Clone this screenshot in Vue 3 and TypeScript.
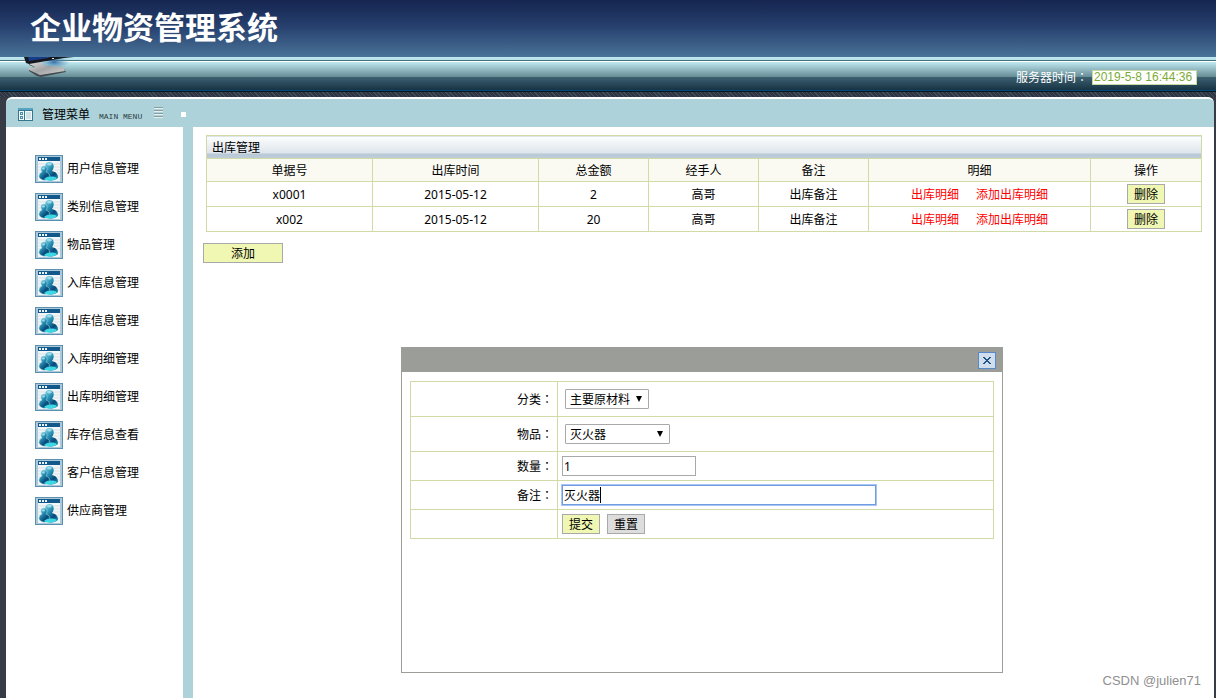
<script setup lang="ts">
import { ref } from 'vue'

interface StockOut {
  no: string
  date: string
  total: number
  handler: string
  remark: string
}

const menu: string[] = [
  '用户信息管理', '类别信息管理', '物品管理', '入库信息管理', '出库信息管理',
  '入库明细管理', '出库明细管理', '库存信息查看', '客户信息管理', '供应商管理',
]
const columns: string[] = ['单据号', '出库时间', '总金额', '经手人', '备注', '明细', '操作']
const rows = ref<StockOut[]>([
  { no: 'x0001', date: '2015-05-12', total: 2, handler: '高哥', remark: '出库备注' },
  { no: 'x002', date: '2015-05-12', total: 20, handler: '高哥', remark: '出库备注' },
])
const serverTime = ref('2019-5-8 16:44:36')
const dialogOpen = ref(true)
const category = ref('主要原材料')
const item = ref('灭火器')
const quantity = ref('1')
const remark = ref('灭火器')

function removeRow(index: number) {
  rows.value.splice(index, 1)
}
function resetForm() {
  quantity.value = ''
  remark.value = ''
}
</script>

<template>
  <div class="page">
    <header class="banner">
      <h1>企业物资管理系统</h1>
    </header>
    <div class="strip">
      <svg class="laptop" width="52" height="22" viewBox="0 0 52 22" aria-hidden="true">
        <defs>
          <linearGradient id="foot" x1="0" y1="0" x2="1" y2="1">
            <stop offset="0" stop-color="#e6e6e6" />
            <stop offset="0.5" stop-color="#a2a4a6" />
            <stop offset="1" stop-color="#d2d2d2" />
          </linearGradient>
          <radialGradient id="glow">
            <stop offset="0" stop-color="#356ea8" />
            <stop offset="1" stop-color="#5d9dbb" stop-opacity="0" />
          </radialGradient>
        </defs>
        <ellipse cx="30" cy="5" rx="16" ry="7" fill="url(#glow)" />
        <path d="M5 6 15 5 22 9 40 12 42 15 17 20 13 19 5 14 5 12 10 10 5 8Z" fill="#444c50" />
        <path d="M3 5 15 4 22 9 39 10 41 14 16 18 5 13 4 11 11 10 5 7Z" fill="url(#foot)" />
        <path d="M0 0H50L40 1 5 7 2 6Z" fill="#15191f" />
        <path d="M4 0H26L24 1 5 4Z" fill="#173c88" />
        <path d="M28 1h2v1h-2z" fill="#dce7ef" />
      </svg>
      <label class="clock">
        <span>服务器时间<i class="colon">：</i></span>
        <input v-model="serverTime" type="text" readonly />
      </label>
    </div>

    <div class="shell">
      <div class="shell-head">
        <svg width="15" height="13" viewBox="0 0 15 13" aria-hidden="true">
          <path d="M0 0h15v13H0z" fill="#33788f" />
          <path d="M0 0h15v2H0z" fill="#57a3c1" />
          <path d="M1 3h5v9H1zM7 3h7v9H7z" fill="#f2f8fa" />
          <path d="M8 4h5v7H8z" fill="#cfe1e8" />
          <path d="M2 4h3v3H2zM2 8h3v3H2z" fill="#4a8fa8" />
          <path d="M3 5h1v1H3zM3 9h1v1H3z" fill="#d5eaf2" />
        </svg>
        <strong>管理菜单</strong>
        <span class="latin">MAIN MENU</span>
        <svg class="lines" width="9" height="11" viewBox="0 0 9 11" aria-hidden="true">
          <path d="M0 0h9v1H0zM0 3h9v1H0zM0 6h9v1H0zM0 9h9v1H0z" fill="#8b9da1" />
          <path d="M0 1h9v1H0zM0 4h9v1H0zM0 7h9v1H0zM0 10h9v1H0z" fill="#e5eff1" />
        </svg>
        <span class="dot"></span>
      </div>

      <div class="body">
        <nav class="side">
          <a v-for="name in menu" :key="name" href="#">
            <svg width="28" height="28" viewBox="0 0 28 28" aria-hidden="true">
              <defs>
                <linearGradient id="person" x1="0" y1="0" x2="0.8" y2="1">
                  <stop offset="0" stop-color="#8fdcea" />
                  <stop offset="0.4" stop-color="#2a93b6" />
                  <stop offset="0.75" stop-color="#064878" />
                  <stop offset="1" stop-color="#1f87ad" />
                </linearGradient>
              </defs>
              <path d="M0 0h28v28H0z" fill="#5d90ae" />
              <path d="M1 1h26v26H1z" fill="#acc9d9" />
              <path d="M3 2h22v4H3z" fill="#10598a" />
              <path d="M4 3h2v2H4zM7 3h2v2H7zM10 3h2v2h-2z" fill="#e8f4f9" />
              <path d="M3 6h22v20H3z" fill="#f2f6f8" />
              <path d="M3 9h22M3 12h22M3 15h22M3 18h22M3 21h22" stroke="#d9e3e9" />
              <path d="M11 16c-2-4-1-9 3-9 5 0 6 5 3 9 4 1 6 3 6 7-3 3-9 3-13 1Z" fill="url(#person)" />
              <path d="M4 22c0-3 1-4 3-5-2-3-1-6 2-6s4 3 2 6c3 1 4 3 4 6-3 3-9 3-11-1Z" fill="url(#person)" stroke="#a5dbe8" stroke-width="0.5" />
              <path d="M12 9c1-2 4-2 5 0-1 2-4 2-5 0ZM7 13c1-1 3-1 3 0 0 2-3 2-3 0Z" fill="#b8ecf4" opacity="0.7" />
              <path d="M9 24c4-3 9-3 13-1-3 3-9 4-13 1Z" fill="#3ed8e4" />
            </svg>
            <span>{{ name }}</span>
          </a>
        </nav>

        <main class="content">
          <table class="list">
            <colgroup>
              <col class="wide" /><col class="wide" />
              <col class="mid" /><col class="mid" /><col class="mid" />
              <col class="links" /><col />
            </colgroup>
            <thead>
              <tr class="title"><th colspan="7">出库管理</th></tr>
              <tr class="heads"><th v-for="c in columns" :key="c" scope="col">{{ c }}</th></tr>
            </thead>
            <tbody>
              <tr v-for="(row, index) in rows" :key="row.no">
                <td>{{ row.no }}</td>
                <td>{{ row.date }}</td>
                <td>{{ row.total }}</td>
                <td>{{ row.handler }}</td>
                <td>{{ row.remark }}</td>
                <td>
                  <div class="actions"><a href="#">出库明细</a><a href="#">添加出库明细</a></div>
                </td>
                <td class="tool"><button class="btn" type="button" @click="removeRow(index)">删除</button></td>
              </tr>
            </tbody>
          </table>
          <button class="btn add" type="button" @click="dialogOpen = true">添加</button>

          <section v-if="dialogOpen" class="dialog" role="dialog" aria-label="添加">
            <div class="dialog-head">
              <button type="button" class="close" aria-label="关闭" @click="dialogOpen = false">
                <svg width="8" height="7" viewBox="0 0 8 7" aria-hidden="true">
                  <path d="M0 0h2v1h1v1h2V1h1V0h2v1H7v1H6v1H5v1h1v1h1v1h1v1H6V6H5V5H3v1H2v1H0V6h1V5h1V4h1V3H2V2H1V1H0z" fill="#1f5288" />
                </svg>
              </button>
            </div>
            <form @submit.prevent>
              <table class="form">
                <tbody>
                  <tr class="tall">
                    <th scope="row"><label for="category">分类<i class="colon">：</i></label></th>
                    <td>
                      <span class="pick">
                        <select id="category" v-model="category" class="short"><option>主要原材料</option></select>
                        <svg width="6" height="6" viewBox="0 0 6 6" aria-hidden="true"><path d="M0 0h6L3 6z" /></svg>
                      </span>
                    </td>
                  </tr>
                  <tr class="tall">
                    <th scope="row"><label for="item">物品<i class="colon">：</i></label></th>
                    <td>
                      <span class="pick">
                        <select id="item" v-model="item" class="long"><option>灭火器</option></select>
                        <svg width="6" height="6" viewBox="0 0 6 6" aria-hidden="true"><path d="M0 0h6L3 6z" /></svg>
                      </span>
                    </td>
                  </tr>
                  <tr>
                    <th scope="row"><label for="quantity">数量<i class="colon">：</i></label></th>
                    <td><input id="quantity" v-model="quantity" class="quantity" type="text" /></td>
                  </tr>
                  <tr>
                    <th scope="row"><label for="remark">备注<i class="colon">：</i></label></th>
                    <td>
                      <span class="field">
                        <input id="remark" v-model="remark" class="remark" type="text" />
                        <span class="caret"></span>
                      </span>
                    </td>
                  </tr>
                  <tr>
                    <th></th>
                    <td>
                      <div class="buttons">
                        <button class="btn" type="submit">提交</button>
                        <button class="btn gray" type="button" @click="resetForm">重置</button>
                      </div>
                    </td>
                  </tr>
                </tbody>
              </table>
            </form>
          </section>
          <span class="mark">CSDN @julien71</span>
        </main>
      </div>
    </div>
  </div>
</template>

<style>
body {
  margin: 0;
}
</style>

<style scoped>
* {
  box-sizing: border-box;
}
.page {
  display: flex;
  flex-direction: column;
  min-height: 100vh;
  background: #363b46;
  color: #000;
  font: 12px/18px "Noto Sans", "Noto Sans CJK SC", sans-serif;
}
button, input, select {
  font: inherit;
  color: inherit;
  margin: 0;
}
.colon {
  font-family: "Noto Sans CJK TC", sans-serif;
  font-style: normal;
}
.banner {
  height: 57px;
  padding-left: 30px;
  background: linear-gradient(#152550, #263f6d 45%, #497398);
}
h1 {
  margin: 0;
  color: #fff;
  font: bold 31px/52px "Noto Sans CJK SC", sans-serif;
}
.strip {
  display: flex;
  justify-content: space-between;
  height: 40px;
  padding: 0 19px 0 24px;
  background:
    linear-gradient(#bfe8f0 0, #b5e0ea 3px, #45737d 3px, #45737d 4px, #fff 4px, #fff 5px, #bfe8f0 5px, #658b94 20px, #3d6172 20px, #173343 33px, #004b80 33px, #004b80 34px, #10151c 34px, #10151c 35px, transparent 35px),
    repeating-linear-gradient(45deg, #3c5060 0, #3c5060 1px, #30343e 1px, #30343e 3px);
}
.laptop {
  display: block;
}
.clock {
  display: flex;
  align-items: center;
  gap: 4px;
  height: 40px;
  color: #fff;
}
.clock input {
  width: 105px;
  height: 15px;
  padding: 0 1px;
  border: 1px solid #c6d8a0;
  background: #fff;
  color: #7bab36;
  font: 12px/13px "Liberation Sans", sans-serif;
}
.shell {
  display: flex;
  flex: 1;
  flex-direction: column;
  margin: 0 2px 0 6px;
  border-radius: 6px 6px 0 0;
  background: #add2da;
  overflow: hidden;
}
.shell-head {
  display: flex;
  align-items: center;
  height: 30px;
  padding: 2px 0 0 12px;
  border-top: 2px solid #fff;
  border-radius: 6px 6px 0 0;
}
.shell-head strong {
  padding-top: 2px;
  margin-left: 9px;
  font-weight: 400;
}
.latin {
  margin: 5px 0 0 9px;
  color: #2c3c40;
  font: 8px/8px "Liberation Mono", monospace;
}
.lines {
  margin: 0 18px 4px 12px;
}
.dot {
  width: 5px;
  height: 5px;
  background: #fff;
}
.body {
  display: flex;
  flex: 1;
  gap: 10px;
}
.side {
  display: flex;
  flex-direction: column;
  gap: 10px;
  width: 177px;
  padding: 28px 0 0 29px;
  background: #fff;
}
.side a {
  display: flex;
  align-items: center;
  gap: 4px;
  color: #000;
  text-decoration: none;
}
.content {
  position: relative;
  flex: 1;
  min-width: 0;
  padding: 8px 12px 0 10px;
  background: #fff;
}
table {
  border-collapse: collapse;
  table-layout: fixed;
}
th, td {
  padding: 0;
  border: 1px solid #d1dba5;
  font-weight: 400;
}
.list {
  width: calc(100% - 3px);
  margin-left: 3px;
  text-align: center;
}
.list th, .list td {
  padding-top: 2px;
}
.list .tool {
  padding-top: 0;
}
.wide {
  width: 166px;
}
.mid {
  width: 110px;
}
.links {
  width: 222px;
}
.list tr {
  height: 25px;
}
.list .title, .list .heads {
  height: 23px;
}
.list .title th {
  padding-left: 5px;
  text-align: left;
  background: linear-gradient(#fdfefe, #dce4ea 17px, #b8c8d5 17px, #c0cdda);
}
.heads {
  background: #fafaf3;
}
.actions {
  display: flex;
  justify-content: center;
  gap: 17px;
}
.actions a {
  color: #f00;
  text-decoration: none;
}
.btn {
  display: inline-block;
  height: 20px;
  width: 38px;
  padding: 1px 0 0;
  border: 1px solid #a9a9a9;
  background: #f0f7b2;
  line-height: 18px;
  vertical-align: middle;
}
.btn.add {
  display: block;
  width: 80px;
  margin-top: 11px;
}
.btn.gray {
  background: #ddd;
}
.dialog {
  position: absolute;
  top: 220px;
  left: 208px;
  width: 602px;
  height: 326px;
  border: 1px solid #9b9d99;
  background: #fff;
}
.dialog-head {
  display: flex;
  align-items: center;
  justify-content: flex-end;
  height: 24px;
  padding-right: 6px;
  background: #9b9d99;
}
.close {
  display: flex;
  align-items: center;
  justify-content: center;
  width: 18px;
  height: 17px;
  padding: 0;
  border: 1px solid #5688ca;
  background: #cfdded;
}
form {
  padding: 9px 8px;
}
.form {
  width: 100%;
}
.form tr {
  height: 29px;
}
.form .tall {
  height: 35px;
}
.form th {
  width: 147px;
  padding-right: 4px;
  text-align: right;
}
.form td {
  padding-left: 4px;
}
.pick, .field {
  position: relative;
  display: inline-block;
  vertical-align: middle;
}
.pick {
  margin-left: 3px;
}
.pick svg {
  position: absolute;
  top: 7px;
  right: 7px;
  pointer-events: none;
}
select {
  display: block;
  height: 20px;
  padding: 1px 4px 0;
  border: 1px solid #a9a9a9;
  border-radius: 1px;
  background: #fff;
  appearance: none;
}
.short {
  width: 84px;
}
.long {
  width: 105px;
}
.form input {
  display: block;
  height: 20px;
  padding: 0 1px;
  border: 1px solid #a9a9a9;
  background: #fff;
  outline: none;
}
.form .quantity {
  width: 134px;
}
.form .remark {
  width: 314px;
  border-color: #6f9be0;
  box-shadow: 0 0 0 1px #a9c6f5;
}
.caret {
  position: absolute;
  top: 2px;
  left: 38px;
  width: 1px;
  height: 16px;
  background: #000;
}
.buttons {
  display: flex;
  gap: 7px;
}
.mark {
  position: absolute;
  right: 13px;
  bottom: 8px;
  color: #8f8f8f;
  font: 13px/18px "Liberation Sans", sans-serif;
}
</style>
